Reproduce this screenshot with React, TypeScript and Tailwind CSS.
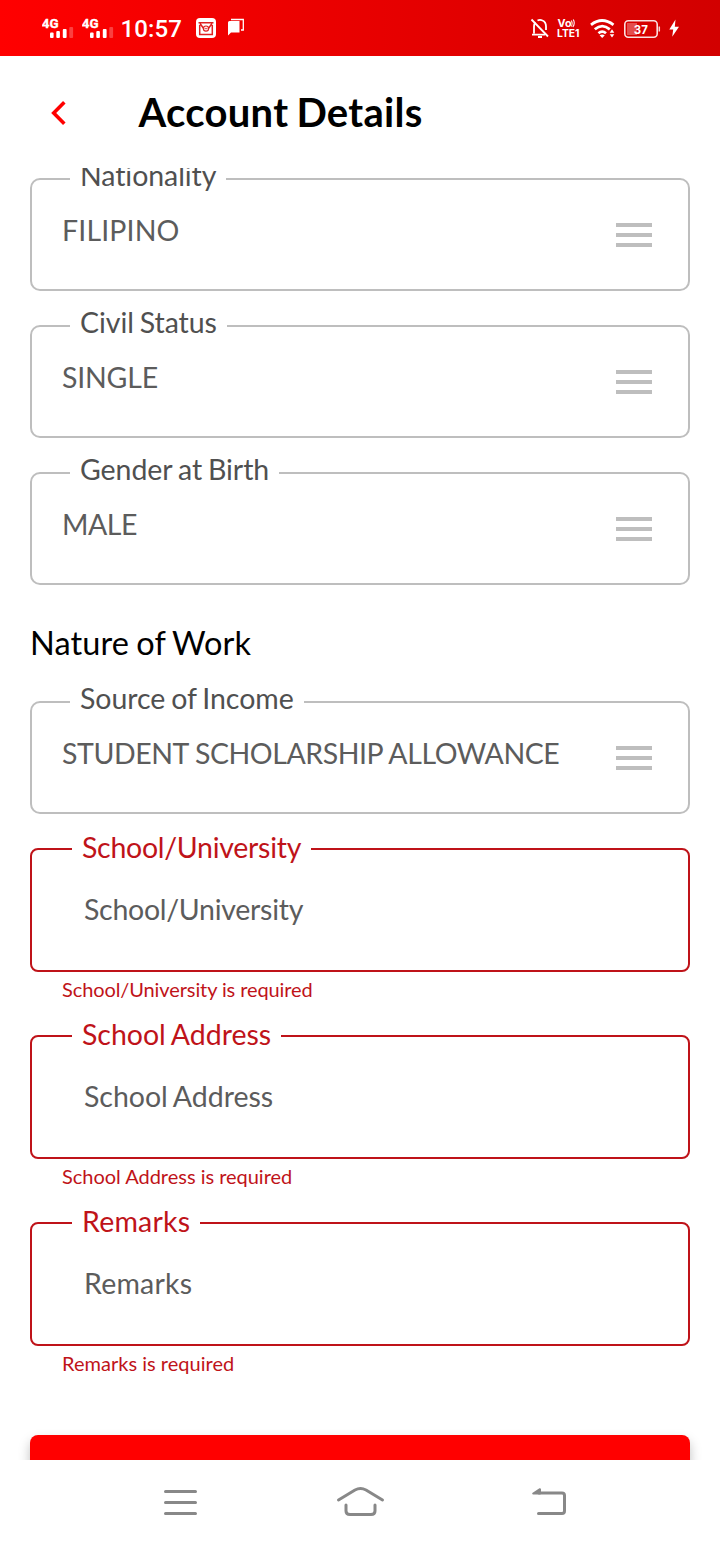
import React from 'react';

function Signal() {
  return (
    <svg width="40" height="56" viewBox="0 0 40 56" fill="#fff">
      <text x="-0.3" y="27.5" fontFamily="Roboto, sans-serif" fontWeight="700" fontSize="13" stroke="#fff" strokeWidth="0.3" textLength="16.8" lengthAdjust="spacingAndGlyphs">4G</text>
      <rect x="8" y="32.5" width="3.6" height="5.5" rx="1" />
      <rect x="14.3" y="31" width="3.6" height="7" rx="1" />
      <rect x="20.8" y="29" width="3.8" height="9" rx="1" />
      <rect x="27.3" y="27" width="3.8" height="11" rx="1" opacity="0.25" />
    </svg>
  );
}

function StatusBar() {
  return (
    <header className="flex h-14 shrink-0 items-center justify-between bg-linear-to-r from-[#ff0000] to-[#d20000] pr-10 pl-[42px]">
      <div className="flex items-center">
        <Signal />
        <Signal />
        <span className="-ml-[1.5px] w-[75.5px] pt-[2px] font-[Roboto,sans-serif] text-[24px] leading-7 font-medium tracking-[0.1px] text-white whitespace-nowrap">10:57</span>
        <svg width="52" height="56" viewBox="0 0 52 56" fill="none">
          <rect x="0" y="18" width="20" height="20" rx="4" fill="#fff" />
          <path d="M2.5 22.7H17.5M3.7 25V34.5H16.3V25M4 23.5L8 29M16 23.5L12 29" stroke="#df2020" strokeWidth="1.5" />
          <circle cx="10" cy="28.6" r="2.6" stroke="#df2020" strokeWidth="1.2" />
          <circle cx="10" cy="28.6" r="0.8" fill="#df2020" />
          <path d="M32 22.5Q32 21 33.5 21H43.5V32.5H35L32 35.5Z" fill="#fff" />
          <path d="M35 19.5H47.3V30H45" stroke="#fff" strokeWidth="1.3" />
        </svg>
      </div>
      <svg width="150" height="56" viewBox="530 0 150 56" fill="none">
        <path d="M532 34.7H545M534 33.5V26.5Q534 24 535.5 22.5M537.5 20.5Q540 19.3 542.5 20.5Q546 22 546 26.5V30M538 37H542" stroke="#fff" strokeWidth="1.8" />
        <path d="M531.5 19.5L548 36.5" stroke="#fff" strokeWidth="1.8" />
        <g fill="#fff" fontFamily="Inter, sans-serif" fontWeight="700">
          <text x="557.5" y="27" fontSize="10.5" textLength="14" lengthAdjust="spacingAndGlyphs">Vo</text>
          <text x="557" y="37" fontSize="10.5" textLength="22.5" lengthAdjust="spacingAndGlyphs">LTE1</text>
        </g>
        <path d="M571.5 20.5Q573 23.5 571.5 26.5M573.3 19.5Q575.5 23.5 572.8 27" stroke="#fff" strokeWidth="1.1" />
        <g stroke="#fff" strokeWidth="2.8">
          <path d="M591 24.8Q602 16.2 613.5 24.8" />
          <path d="M594.8 29.3Q602.2 23 609.8 29.3" />
          <path d="M598.5 33.2Q602.2 30 606 33.2" />
        </g>
        <path d="M599.6 35.2Q602.2 33.6 604.8 35.2L602.2 38ZM609.7 32.7L612 29.3L614.3 32.7ZM609.7 34.2H614.3L612 37.5Z" fill="#fff" />
        <rect x="624.8" y="20.8" width="32.4" height="16.4" rx="3.5" stroke="#fff" strokeOpacity="0.88" strokeWidth="1.6" />
        <path d="M627 23H637V35H627Z" fill="#fff" fillOpacity="0.3" />
        <path d="M659.3 26.5V31.5" stroke="#fff" strokeOpacity="0.8" strokeWidth="1.5" />
        <text x="633.8" y="34" fill="#fff" fontFamily="Inter, sans-serif" fontWeight="700" fontSize="12" textLength="14" lengthAdjust="spacingAndGlyphs">37</text>
        <path d="M675.5 19.5L669.3 29.5H673.2L672.2 36.8L679 26.7H674.8Z" fill="#fff" />
      </svg>
    </header>
  );
}

function SelectField({ label, value, valueSpacing }: { label: string; value: string; valueSpacing: string }) {
  return (
    <div className="relative flex h-[113px] shrink-0 items-start justify-between rounded-[10px] border-2 border-[#bebebe] pt-[33px] pr-9 pl-[30px]">
      <span className="absolute -top-[22px] left-[38px] bg-white px-2.5 text-[28.5px] leading-[34px] tracking-[-0.06px] text-[#505050] [word-spacing:-1.3px] whitespace-nowrap">{label}</span>
      <span className={`text-[28.5px] leading-[34px] text-[#5c5c5c] whitespace-nowrap ${valueSpacing}`}>{value}</span>
      <span className="mt-[10px] flex w-9 flex-col gap-1.5">
        <span className="h-1 bg-[#bebebe]" />
        <span className="h-1 bg-[#bebebe]" />
        <span className="h-1 bg-[#bebebe]" />
      </span>
    </div>
  );
}

function TextField({ label, spacing, helperSpacing }: { label: string; spacing: string; helperSpacing: string }) {
  return (
    <div className="h-[187px]">
      <div className="relative h-[124px] rounded-lg border-2 border-[#bf1319] pt-[42px] pl-[52px]">
        <span className={`absolute -top-5 left-10 bg-white px-2.5 text-[28.5px] leading-[34px] text-[#bf1319] [word-spacing:-1.3px] whitespace-nowrap ${spacing}`}>{label}</span>
        <span className={`block text-[28.5px] leading-[34px] text-[#5c5c5c] [word-spacing:-1.3px] whitespace-nowrap ${spacing}`}>{label}</span>
      </div>
      <p className={`pt-[5px] pl-8 text-[20px] leading-6 text-[#bf1319] ${helperSpacing}`}>{label} is required</p>
    </div>
  );
}

function NavigationBar() {
  return (
    <nav className="flex h-[84px] shrink-0 items-center justify-center bg-white">
      <svg width="720" height="84" viewBox="0 1460 720 84" fill="none" stroke="#888" strokeWidth="3" strokeLinecap="round" strokeLinejoin="round">
        <path d="M165.5 1491.5H195.5M165.5 1502.5H195.5M165.5 1513.5H195.5" />
        <path d="M338.5 1500L355 1490Q360.5 1487 366 1490L382.5 1500M346 1505V1511Q346 1514.5 350 1514.5H371Q375 1514.5 375 1511V1505" />
        <path d="M539 1493H562Q564.5 1493 564.5 1495.5V1511Q564.5 1513.5 562 1513.5H538.5" />
        <path d="M533.2 1493.5L540 1489.2V1493.5Z" fill="#888" strokeWidth="2" />
      </svg>
    </nav>
  );
}

export default function App() {
  return (
    <div className="flex h-[1544px] w-[720px] flex-col overflow-hidden bg-white font-[Lato,sans-serif]">
      <StatusBar />
      <div className="flex h-28 shrink-0 items-center pl-[50px]">
        <svg className="mt-[2px]" width="18" height="26" viewBox="0 0 18 26" fill="none" stroke="#ff0000" strokeWidth="3.6">
          <path d="M14.3 2.3L3.7 13L14.3 23.7" />
        </svg>
        <h1 className="pl-[70.5px] text-[40px] leading-[48px] font-bold tracking-[0.3px] text-black [word-spacing:-2px]">Account Details</h1>
      </div>
      <main className="flex h-[1292px] shrink-0 flex-col overflow-hidden px-[30px] pt-2.5">
        <div className="flex flex-col gap-[34px]">
          <SelectField label="Nationality" value="FILIPINO" valueSpacing="tracking-[0.15px]" />
          <SelectField label="Civil Status" value="SINGLE" valueSpacing="tracking-[-0.2px]" />
          <SelectField label="Gender at Birth" value="MALE" valueSpacing="tracking-[-0.45px]" />
        </div>
        <h2 className="pt-[38px] pb-[38px] text-[32.5px] leading-10 tracking-[0.12px] text-black [word-spacing:-1.3px]">Nature of Work</h2>
        <SelectField label="Source of Income" value="STUDENT SCHOLARSHIP ALLOWANCE" valueSpacing="tracking-[-0.44px]" />
        <div className="pt-[34px]">
          <TextField label="School/University" spacing="tracking-[-0.28px]" helperSpacing="tracking-[-0.1px]" />
          <TextField label="School Address" spacing="tracking-[-0.02px]" helperSpacing="tracking-[-0.02px]" />
          <TextField label="Remarks" spacing="tracking-[0.23px]" helperSpacing="tracking-[0.02px]" />
        </div>
        <button aria-label="Next" className="mt-[26px] h-[90px] shrink-0 rounded-lg bg-[#ff0000] shadow-[0_6px_12px_rgba(0,0,0,0.25)]" />
      </main>
      <NavigationBar />
    </div>
  );
}
